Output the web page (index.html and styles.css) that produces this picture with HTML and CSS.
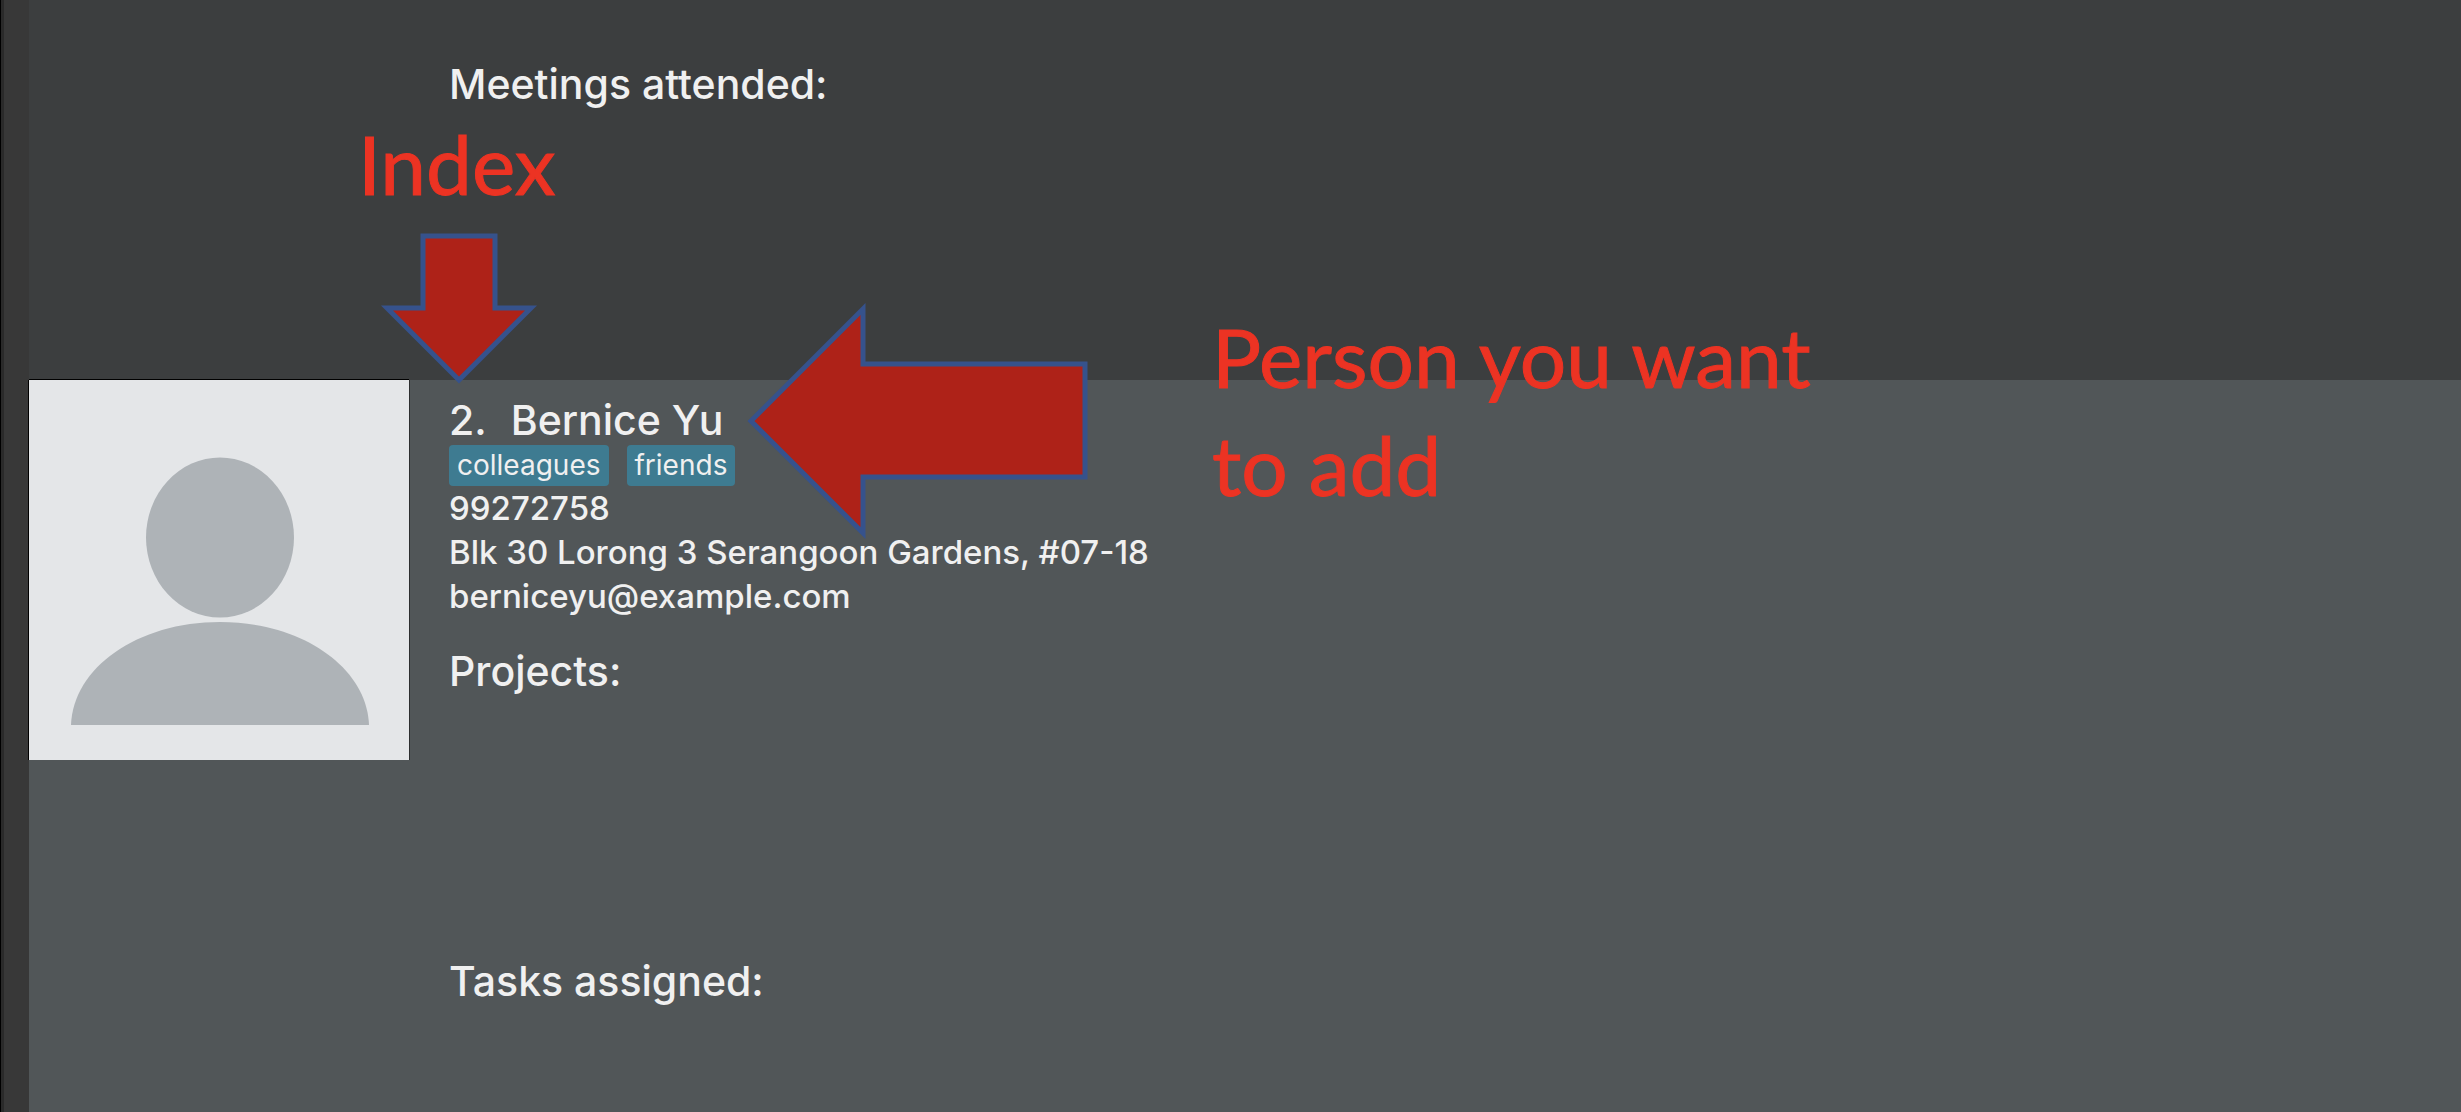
FILE: index.html
```html
<!DOCTYPE html>
<html lang="en">
<head>
<meta charset="utf-8">
<title>Address Book</title>
<link rel="stylesheet" href="styles.css">
</head>
<body>
<main class="people">
  <article class="person person-odd">
    <div class="details">
      <h2 class="heading">Meetings attended:</h2>
    </div>
  </article>
  <article class="person person-even">
    <svg class="photo" viewBox="0 0 380 380" role="img" aria-label="Profile photo">
      <rect width="380" height="380" fill="#e4e6e8"/>
      <ellipse cx="191" cy="157.500" rx="74" ry="80" fill="#aeb3b7"/>
      <path d="M42 345C44 288 108 242 191 242S338 288 340 345Z" fill="#aeb3b7"/>
    </svg>
    <div class="details">
      <h2 class="heading name"><span>2.</span><span>Bernice Yu</span></h2>
      <ul class="tags">
        <li class="tag">colleagues</li>
        <li class="tag">friends</li>
      </ul>
      <p class="line">99272758</p>
      <p class="line">Blk 30 Lorong 3 Serangoon Gardens, #07-18</p>
      <p class="line">berniceyu@example.com</p>
      <section class="projects">
        <h3 class="heading">Projects:</h3>
      </section>
      <section>
        <h3 class="heading">Tasks assigned:</h3>
      </section>
    </div>
  </article>
</main>
<p class="note note-index">Index</p>
<svg class="arrow arrow-down" viewBox="0 0 160 160" aria-hidden="true">
  <path d="M43 16H115V88H151L79 160L7 88H43Z"/>
</svg>
<svg class="arrow arrow-left" viewBox="0 0 350 240" aria-hidden="true">
  <path d="M11 121L123 9V64H345V177H123V233Z"/>
</svg>
<p class="note note-person">Person you want<br>to add</p>
</body>
</html>
```
FILE: styles.css
```css
* {
  box-sizing: border-box;
}

body {
  position: relative;
  display: flex;
  min-height: 100vh;
  margin: 0;
  padding-left: 28px;
  border-left: 1px solid #000;
  background: #383838;
  box-shadow: inset 3px 0 #2a2a2a;
  color: #f0f0f0;
  font-family: Inter, "Liberation Sans", sans-serif;
}

h2,
h3,
p,
ul {
  margin: 0;
  padding: 0;
}

.people {
  flex: 1;
  display: flex;
  flex-direction: column;
}

.person {
  display: grid;
  grid-template-columns: 380px 1fr;
  column-gap: 40px;
  align-items: start;
}

.person-odd {
  min-height: 380px;
  padding-top: 59px;
  background: #3c3e3f;
}

.person-even {
  flex: 1;
  background: #515658;
}

.photo {
  display: block;
  width: 100%;
  box-shadow: 0 -1px #000, 1px 0 #2c2e2f, -1px 0 #000;
}

.details {
  grid-column: 2;
  font-weight: 500;
}

.heading {
  font-size: 41px;
  font-weight: 500;
  line-height: 50px;
}

.name {
  display: flex;
  gap: 24px;
  padding-top: 15px;
}

.tags {
  display: flex;
  gap: 18px;
  list-style: none;
}

.tag {
  padding: 0 8px;
  border-radius: 4px;
  background: #3e7b91;
  font-size: 28px;
  font-weight: 400;
  line-height: 41px;
}

.line {
  font-size: 33px;
  line-height: 44px;
}

.projects {
  min-height: 338px;
  padding-top: 28px;
}

.note {
  position: absolute;
  color: #ec3323;
  font-family: Lato, sans-serif;
  font-size: 82px;
  line-height: 108px;
  -webkit-text-stroke: 1px #ec3323;
}

.note-index {
  left: 357px;
  top: 109px;
}

.note-person {
  left: 1211px;
  top: 302px;
}

.arrow {
  position: absolute;
  overflow: visible;
  fill: #ae2218;
  stroke: #36528c;
  stroke-width: 5;
}

.arrow-down {
  left: 379px;
  top: 220px;
  width: 160px;
}

.arrow-left {
  left: 739px;
  top: 300px;
  width: 350px;
}
```
